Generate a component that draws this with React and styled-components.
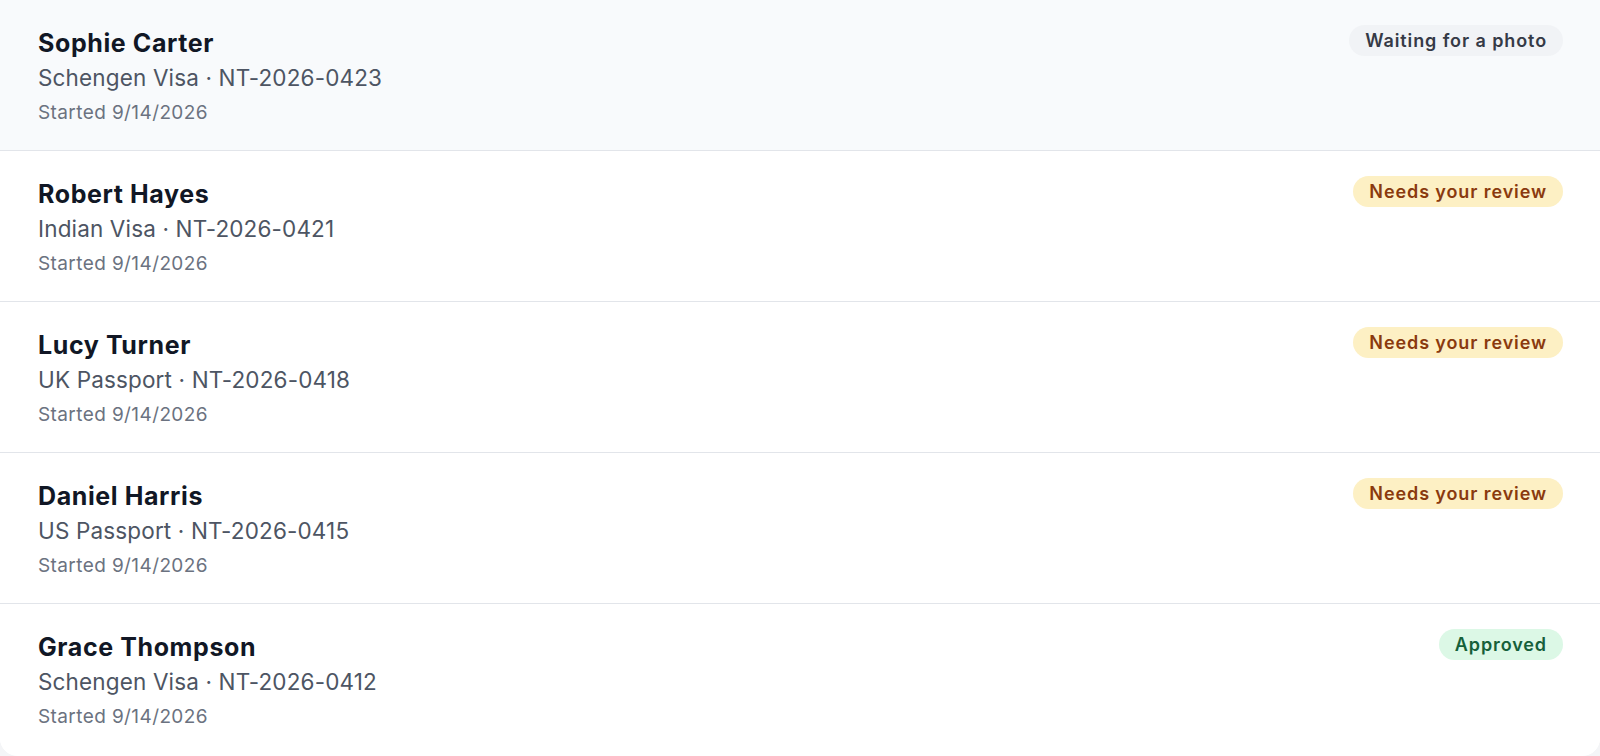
import React from 'react'
import styled, { createGlobalStyle } from 'styled-components';

const GlobalStyle = createGlobalStyle`
    html, body {
        margin: 0;
        padding: 0;
        background: #f4f5f7;
    }
    body {
        font-family: Inter, "Noto Sans", "Liberation Sans", sans-serif;
        -webkit-font-smoothing: antialiased;
    }
`;

const applications = [
    { name: 'Sophie Carter', type: 'Schengen Visa', ref: 'NT-2026-0423', started: '9/14/2026', status: 'photo', active: true },
    { name: 'Robert Hayes', type: 'Indian Visa', ref: 'NT-2026-0421', started: '9/14/2026', status: 'review' },
    { name: 'Lucy Turner', type: 'UK Passport', ref: 'NT-2026-0418', started: '9/14/2026', status: 'review' },
    { name: 'Daniel Harris', type: 'US Passport', ref: 'NT-2026-0415', started: '9/14/2026', status: 'review' },
    { name: 'Grace Thompson', type: 'Schengen Visa', ref: 'NT-2026-0412', started: '9/14/2026', status: 'approved' },
];

const statusLabels = {
    photo: 'Waiting for a photo',
    review: 'Needs your review',
    approved: 'Approved',
};

function App() {
    return (
        <>
            <GlobalStyle />
            <ListCard>
                {applications.map((app) => (
                    <Row key={app.ref} $active={app.active}>
                        <Details>
                            <Name>{app.name}</Name>
                            <Sub>{app.type} · {app.ref}</Sub>
                            <Meta>Started {app.started}</Meta>
                        </Details>
                        <Badge $status={app.status}>{statusLabels[app.status]}</Badge>
                    </Row>
                ))}
            </ListCard>
        </>
    )
}

export default App;

const badgeColors = {
    photo: { bg: '#f1f3f6', fg: '#353a46' },
    review: { bg: '#fdf0c4', fg: '#8a3a0e' },
    approved: { bg: '#dcf8e6', fg: '#16603a' },
};

const ListCard = styled.div`
    width: 1600px;
    height: 756px;
    background: #ffffff;
    border-radius: 0 0 18px 18px;
    overflow: hidden;
    display: flex;
    flex-direction: column;
`;

const Row = styled.div`
    display: flex;
    align-items: flex-start;
    justify-content: space-between;
    height: 151px;
    box-sizing: border-box;
    padding: 26px 37px 0 38px;
    background: ${(p) => (p.$active ? '#f8fafc' : '#ffffff')};
    border-bottom: 1px solid #e2e5ea;
    &:last-child {
        border-bottom: none;
        height: 150px;
    }
`;

const Details = styled.div`
    display: flex;
    flex-direction: column;
`;

const Name = styled.div`
    font-size: 25px;
    font-weight: 700;
    line-height: 34px;
    color: #111725;
    letter-spacing: 0.6px;
`;

const Sub = styled.div`
    font-size: 22.5px;
    line-height: 34px;
    color: #4d5563;
    letter-spacing: 0.15px;
    margin-top: 1px;
`;

const Meta = styled.div`
    font-size: 19px;
    line-height: 30px;
    color: #6b7280;
    letter-spacing: 0.4px;
    margin-top: 3px;
`;

const Badge = styled.span`
    display: inline-flex;
    align-items: center;
    height: 31px;
    padding: 0 16px;
    margin-top: -1px;
    border-radius: 16px;
    font-size: 18px;
    font-weight: 600;
    letter-spacing: 0.9px;
    white-space: nowrap;
    background: ${(p) => badgeColors[p.$status].bg};
    color: ${(p) => badgeColors[p.$status].fg};
`;
